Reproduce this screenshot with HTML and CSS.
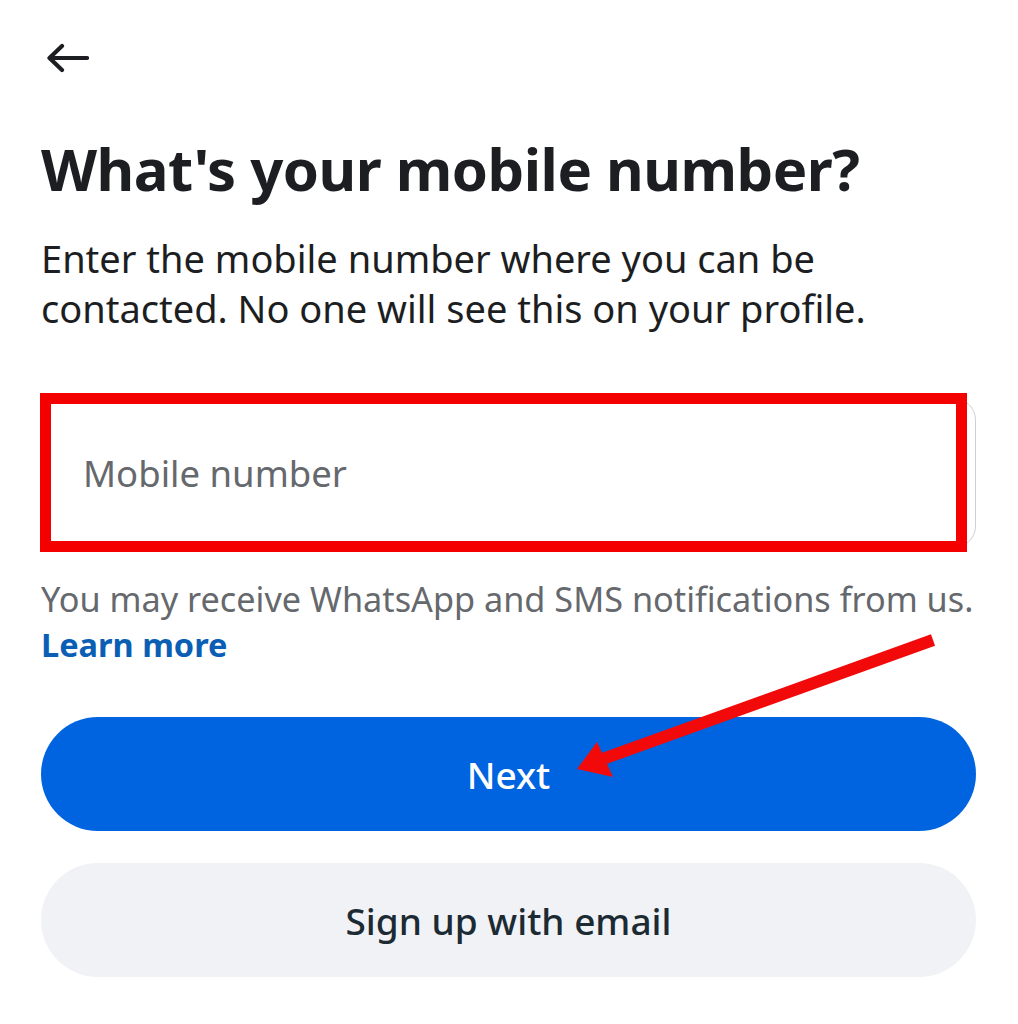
FILE: index.html
```html
<!DOCTYPE html>
<html lang="en">
<head>
<meta charset="utf-8">
<title>What's your mobile number?</title>
<link rel="stylesheet" href="styles.css">
</head>
<body>
<main class="screen">
  <header class="topbar">
    <button class="back" aria-label="Back">
      <svg width="44" height="30" viewBox="0 0 44 30" aria-hidden="true">
        <path d="M42 15H5M17 3L4.5 15L17 27" fill="none" stroke="#1c1e21" stroke-width="4.2" stroke-linecap="round" stroke-linejoin="round"/>
      </svg>
    </button>
  </header>

  <h1 class="title">What's your mobile number?</h1>
  <p class="lead">Enter the mobile number where you can be contacted. No one will see this on your profile.</p>

  <div class="field-wrap">
    <label class="field">
      <input class="field-input" type="tel" placeholder="Mobile number">
    </label>
    <span class="highlight" aria-hidden="true"></span>
  </div>

  <p class="note">You may receive WhatsApp and SMS notifications from us.<br><a class="link" href="#">Learn more</a></p>

  <div class="actions">
    <button class="btn btn-primary">Next</button>
    <button class="btn btn-secondary">Sign up with email</button>
  </div>

  <svg class="pointer" width="1018" height="1024" viewBox="0 0 1018 1024" aria-hidden="true">
    <line x1="933" y1="640" x2="600" y2="760" stroke="#f20a0a" stroke-width="12"/>
    <polygon points="577,769 597,742 613,777" fill="#f20a0a"/>
  </svg>
</main>
</body>
</html>
```
FILE: styles.css
```css
* {
  box-sizing: border-box;
}

html,
body {
  margin: 0;
  background: #ffffff;
}

body {
  font-family: "Noto Sans", "Open Sans", sans-serif;
  color: #1c1e21;
  width: 1018px;
  height: 1024px;
  overflow: hidden;
}

.screen {
  position: relative;
  padding: 0 42px 0 41px;
  height: 1024px;
}

.topbar {
  height: 124px;
  display: flex;
  align-items: flex-start;
  padding-top: 43px;
}

.back {
  border: 0;
  background: none;
  padding: 0;
  margin-left: 4px;
  display: flex;
  cursor: pointer;
}

.title {
  margin: 0;
  font-size: 58px;
  font-weight: 700;
  line-height: 90px;
  letter-spacing: -0.5px;
  color: #1c1e21;
}

.lead {
  margin: 19px 0 0;
  font-size: 38px;
  line-height: 50px;
  color: #1c1e21;
  width: 900px;
}

.field-wrap {
  position: relative;
  margin-top: 65px;
}

.field {
  display: flex;
  align-items: center;
  height: 150px;
  border: 1.5px solid #ccd0d5;
  border-radius: 22px;
  padding: 0 40px;
  margin-left: 1px;
}

.field-input {
  border: 0;
  outline: none;
  background: transparent;
  font-family: inherit;
  font-size: 36.5px;
  color: #1c1e21;
  width: 100%;
  padding: 0;
}

.field-input::placeholder {
  color: #65686c;
}

.highlight {
  position: absolute;
  left: -1px;
  top: -5px;
  width: 927px;
  height: 159px;
  border: 11px solid #f40000;
}

.note {
  margin: 28px 0 0;
  font-size: 34.25px;
  line-height: 45px;
  color: #65686c;
}

.link {
  color: #0a5fb4;
  font-weight: 700;
  font-size: 32.5px;
  text-decoration: none;
}

.actions {
  margin-top: 50px;
  display: flex;
  flex-direction: column;
  gap: 32px;
}

.btn {
  height: 114px;
  border: 0;
  border-radius: 57px;
  font-family: inherit;
  font-size: 37px;
  cursor: pointer;
}

.btn-primary {
  background: #0064e0;
  color: #ffffff;
  font-weight: 500;
}

.btn-secondary {
  background: #f1f2f5;
  color: #1c2b33;
  font-weight: 500;
}

.pointer {
  position: absolute;
  left: 0;
  top: 0;
  pointer-events: none;
}
```
